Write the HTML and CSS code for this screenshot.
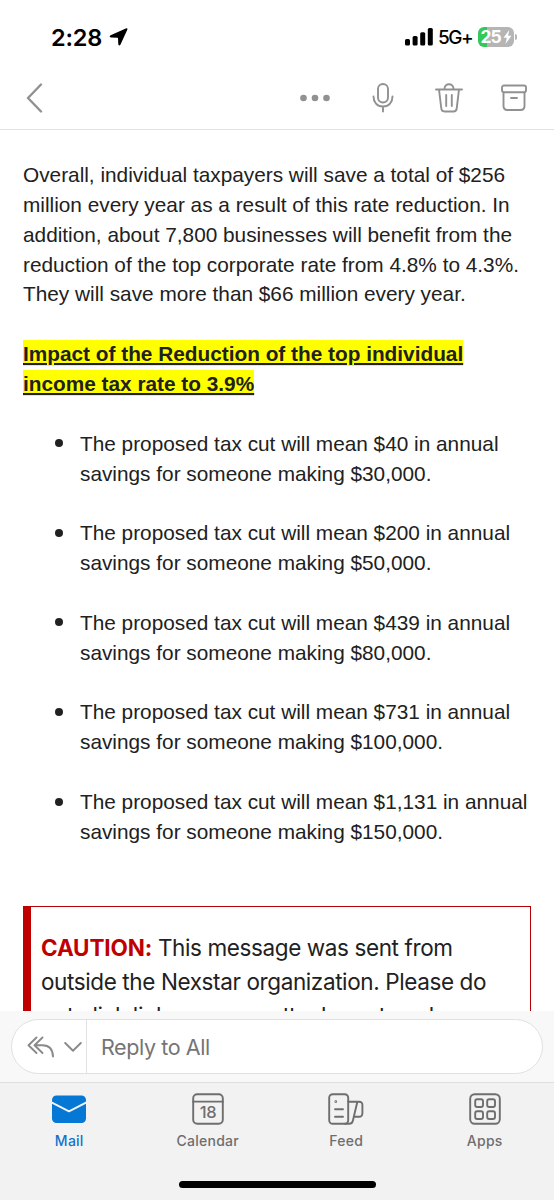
FILE: index.html
```html
<!DOCTYPE html>
<html lang="en">
  <head>
    <meta charset="utf-8">
    <title>Mail</title>
    <meta name="viewport" content="width=device-width, initial-scale=1.0" />
    <link rel="stylesheet" href="styles.css">
  </head>
  <body>
    <header>
      <div class="status">
        <span class="time">2:28</span>
        <svg class="location" width="20" height="20" viewBox="0 0 20 20"><path d="M16.8 1.4Q18.8.6 18.4 2.6L11.4 17.8Q10.4 19.4 9.3 17.6L9 11.3Q9 10.8 8.5 10.8L2 10.6Q-.6 9.8 1.6 8.3Z"/></svg>
        <svg class="signal" width="28" height="18" viewBox="0 0 28 18"><rect y="11" width="5" height="6.5" rx="1.5"/><rect x="7.6" y="8" width="5" height="9.5" rx="1.5"/><rect x="15.2" y="4.3" width="5" height="13.2" rx="1.5"/><rect x="22.8" y="0" width="5" height="17.5" rx="1.5"/></svg>
        <span class="network">5G+</span>
        <span class="battery">25<svg width="9" height="14" viewBox="0 0 8 14"><path d="M5.8 0L0 7.7H3.4L2 14L8 5.8H4.6Z" fill="#fff"/></svg></span>
        <span class="battery-tip"></span>
      </div>
      <div class="toolbar">
        <svg class="back" width="18" height="30" viewBox="0 0 18 30"><path d="M15 1.5L2 15L15 28.5"/></svg>
        <svg class="more" width="30" height="8" viewBox="0 0 30 8"><circle cx="3.5" cy="4" r="3.3"/><circle cx="15" cy="4" r="3.3"/><circle cx="26.5" cy="4" r="3.3"/></svg>
        <svg class="mic" width="22" height="30" viewBox="0 0 22 30"><rect x="6" y="1" width="10" height="18.5" rx="5"/><path d="M1.5 13.5C1.5 19 5 23.5 11 23.5S20.5 19 20.5 13.5M11 23.5V28.5"/></svg>
        <svg class="trash" width="28" height="30" viewBox="0 0 28 30"><path d="M1 6.5H27M9.5 6C9.5 -.3 18.5 -.3 18.5 6M4 6.5L6.3 25.5Q6.7 28.5 9.5 28.5H18.5Q21.3 28.5 21.7 25.5L24 6.5M11.2 12V23M16.8 12V23"/></svg>
        <svg class="archive" width="26" height="28" viewBox="0 0 26 28"><rect x="1" y="1.5" width="24" height="6.7" rx="2"/><path d="M2.5 8.5V22Q2.5 26 6.5 26H19.5Q23.5 26 23.5 22V8.5M10 14H16"/></svg>
      </div>
    </header>

    <div class="message">
      <p>Overall, individual taxpayers will save a total of $256<br>
      million every year as a result of this rate reduction. In<br>
      addition, about 7,800 businesses will benefit from the<br>
      reduction of the top corporate rate from 4.8% to 4.3%.<br>
      They will save more than $66 million every year.</p>
      <h2><span>Impact of the Reduction of the top individual<br>
      income tax rate to 3.9%</span></h2>
      <ul>
        <li>The proposed tax cut will mean $40 in annual<br>savings for someone making $30,000.</li>
        <li>The proposed tax cut will mean $200 in annual<br>savings for someone making $50,000.</li>
        <li>The proposed tax cut will mean $439 in annual<br>savings for someone making $80,000.</li>
        <li>The proposed tax cut will mean $731 in annual<br>savings for someone making $100,000.</li>
        <li>The proposed tax cut will mean $1,131 in annual<br>savings for someone making $150,000.</li>
      </ul>
      <div class="caution"><b>CAUTION:</b> This message was sent from<br>
      outside the Nexstar organization. Please do<br>
      not click links or open attachments unless</div>
    </div>

    <div class="reply">
      <div class="reply-box">
        <div class="reply-mode">
          <svg width="28" height="22" viewBox="0 0 28 22"><path d="M9.5 1.5L1.5 9.3L9.5 17M15.5 1.5L7.5 9.3L15.5 17M7.8 9.3H15.5Q25.5 9.3 26 20.5"/></svg>
          <svg width="18" height="10" viewBox="0 0 18 10"><path d="M1.2 1L9 8.7L16.8 1"/></svg>
        </div>
        <span class="reply-text">Reply to All</span>
      </div>
    </div>

    <nav>
      <a class="active">
        <svg width="36" height="32" viewBox="0 0 36 32"><rect x="1" y="2.5" width="34" height="27.5" rx="4.5" fill="#0478d4"/><path class="flap" d="M.5 9.3L18 18.3L35.5 9.3"/></svg>
        Mail
      </a>
      <a>
        <svg width="32" height="32" viewBox="0 0 32 32"><rect x="1.2" y="1.2" width="29.6" height="29.6" rx="4"/><path d="M1.2 8.6H30.8"/><text x="16" y="25">18</text></svg>
        Calendar
      </a>
      <a>
        <svg width="36" height="32" viewBox="0 0 36 32"><rect x="1.2" y="1.2" width="19" height="29.6" rx="3.5"/><path d="M20.2 8.8H31Q34.6 8.8 34.4 12.5V20Q34.4 23.8 31 23.8H26.3M29.3 9L24.8 28Q24.2 30.8 21 30.8H17M7 16.3H15M7 23.8H15"/><circle cx="7.8" cy="8.7" r=".4"/></svg>
        Feed
      </a>
      <a>
        <svg width="32" height="32" viewBox="0 0 32 32"><rect x="1.2" y="1.2" width="29.6" height="29.6" rx="4.5"/><rect x="6.2" y="6.2" width="7.8" height="7.8" rx="2"/><rect x="18.2" y="6.2" width="7.8" height="7.8" rx="2"/><rect x="6.2" y="18.2" width="7.8" height="7.8" rx="2"/><rect x="18.2" y="18.2" width="7.8" height="7.8" rx="2"/></svg>
        Apps
      </a>
    </nav>
    <div class="home"><span></span></div>
  </body>
</html>
```

FILE: styles.css
```css
* {
  box-sizing:border-box;
}

body {
  margin:0;
  width:554px;
  height:1200px;
  display:flex;
  flex-direction:column;
  overflow:hidden;
  background:#fff;
  color:#212121;
  font-family:Inter, sans-serif;
}

svg {
  display:block;
  flex:none;
}

header {
  height:130px;
  flex:none;
  border-bottom:1px solid #e1e1e1;
}

.status {
  height:74px;
  display:flex;
  align-items:center;
  padding:0 38px 0 51px;
  color:#000;
}

.time {
  font-size:23.5px;
  font-weight:600;
  letter-spacing:-0.2px;
  width:58px;
  white-space:nowrap;
}

.signal {
  margin-left:auto;
}

.network {
  font-size:19px;
  font-weight:500;
  letter-spacing:-1.5px;
  width:34px;
  margin:0 6px 0 5px;
  white-space:nowrap;
}

.battery {
  width:36px;
  height:20px;
  border-radius:6px;
  background:linear-gradient(90deg, #34c759 9px, #b5b5b5 9px);
  color:#fff;
  font-size:17.5px;
  font-weight:700;
  line-height:20px;
  letter-spacing:-1px;
  display:flex;
  align-items:center;
  justify-content:center;
  gap:2px;
}

.battery-tip {
  width:2px;
  height:6px;
  margin:0 -1px 0 1px;
  border-radius:0 2px 2px 0;
  background:#b5b5b5;
}

.toolbar {
  height:48px;
  display:flex;
  align-items:center;
  padding:0 27px 0 26px;
}

.toolbar svg {
  fill:none;
  stroke:#919191;
  stroke-width:1.9;
  stroke-linecap:round;
  stroke-linejoin:round;
}

.toolbar .back {
  stroke-width:2.4;
  margin-right:auto;
}

.toolbar .more {
  fill:#919191;
  stroke:none;
}

.mic {
  margin-left:42px;
}

.trash {
  margin-left:41px;
}

.archive {
  margin-left:38px;
}

.message {
  flex:1;
  min-height:0;
  overflow:hidden;
  padding:30px 23px 0;
  font:20.8px/29.86px 'Liberation Sans', Arial, sans-serif;
  white-space:nowrap;
}

p, h2, ul {
  margin:0 0 29.86px;
}

h2 {
  font-size:20.8px;
}

h2 span {
  background:#ff0;
  text-decoration:underline;
  padding:2px 0 1px;
}

ul {
  padding-left:57px;
  list-style:none;
}

li {
  margin-bottom:29.86px;
}

li::before {
  content:'';
  display:inline-block;
  width:8px;
  height:8px;
  margin:0 17px 0 -25px;
  border-radius:50%;
  background:#212121;
  vertical-align:3.5px;
}

.caution {
  height:150px;
  margin-top:59px;
  padding:24px 0 0 10px;
  border:1px solid #b50005;
  border-left:8px solid #c00000;
  font:22.5px/34px Inter, sans-serif;
  letter-spacing:-0.39px;
}

.caution b {
  color:#c00000;
  letter-spacing:-0.15px;
}

.reply {
  height:71px;
  flex:none;
  padding:8px 11px;
  background:#f8f8f8;
}

.reply-box {
  height:55px;
  display:flex;
  align-items:center;
  background:#fff;
  border:1px solid #e1e1e1;
  border-radius:28px;
}

.reply-mode {
  width:75px;
  height:53px;
  display:flex;
  align-items:center;
  gap:9px;
  padding-left:15px;
  border-right:1px solid #e1e1e1;
}

.reply-mode svg {
  fill:none;
  stroke:#8a8a8a;
  stroke-width:1.9;
  stroke-linecap:round;
  stroke-linejoin:round;
}

.reply-text {
  margin-left:14px;
  color:#757575;
  font-size:21.5px;
  letter-spacing:-0.4px;
}

nav {
  height:84px;
  flex:none;
  display:flex;
  padding-top:10px;
  border-top:1px solid #dedede;
  background:#f3f2f3;
}

nav a {
  width:138.5px;
  display:flex;
  flex-direction:column;
  align-items:center;
  gap:7px;
  color:#6e6e6e;
  font-size:14px;
  font-weight:500;
  line-height:18px;
  letter-spacing:0.25px;
}

nav .active {
  color:#0f74cc;
}

nav svg {
  fill:none;
  stroke:#6e6e6e;
  stroke-width:1.9;
  stroke-linecap:round;
  stroke-linejoin:round;
}

nav .active svg {
  stroke:none;
}

nav .flap {
  stroke:#f4f3f4;
}

nav text {
  fill:#6e6e6e;
  stroke:none;
  font-size:16.5px;
  letter-spacing:-0.3px;
  text-anchor:middle;
}

.home {
  height:34px;
  flex:none;
  padding-top:15px;
  background:#f2f2f3;
}

.home span {
  display:block;
  width:197px;
  height:7px;
  margin:0 auto;
  border-radius:4px;
  background:#000;
}
```
